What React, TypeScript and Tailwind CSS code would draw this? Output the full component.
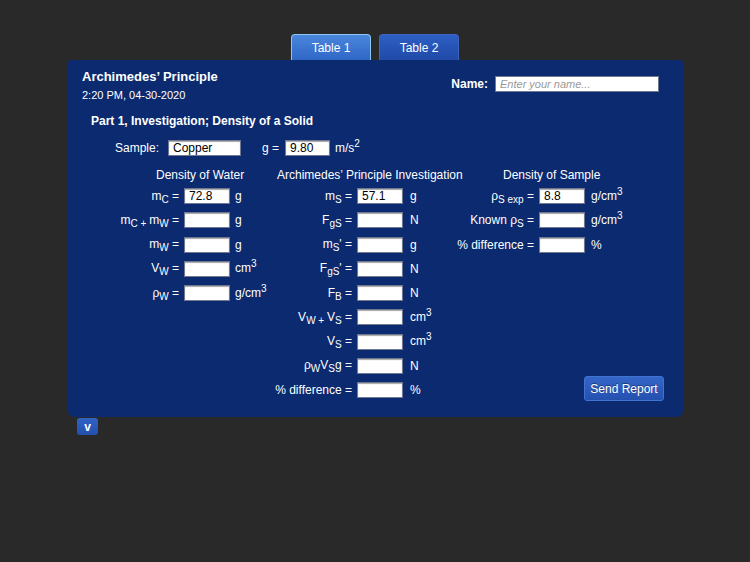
import React from "react";

const Box = ({ v, w = "w-[46px]" }: { v?: string; w?: string }) => (
  <div
    className={`${w} h-[16px] bg-white border border-[#6f7890] shadow-[inset_0_1px_1px_rgba(0,0,0,0.35)] text-black text-[12px] leading-[14px] pl-[4px] shrink-0`}
  >
    {v}
  </div>
);

const Sb = ({ children }: { children: React.ReactNode }) => (
  <span className="text-[10px] relative top-[3px]">{children}</span>
);
const Sp = ({ children }: { children: React.ReactNode }) => (
  <span className="text-[10px] relative top-[-5px]">{children}</span>
);

type Row = { l: React.ReactNode; u: React.ReactNode; v?: string };

const Col = ({
  rows,
  labelW,
  unitMl,
}: {
  rows: Row[];
  labelW: string;
  unitMl: string;
}) => (
  <div className="flex flex-col mt-[1px]">
    {rows.map((r, i) => (
      <div key={i} className="flex items-center h-[24.25px]">
        <div className={`${labelW} flex justify-end pr-[5px] whitespace-nowrap shrink-0`}>
          {r.l}
        </div>
        <Box v={r.v} />
        <div className={`${unitMl} whitespace-nowrap`}>{r.u}</div>
      </div>
    ))}
  </div>
);

const cm3 = (
  <span>
    cm<Sp>3</Sp>
  </span>
);
const gcm3 = (
  <span>
    g/cm<Sp>3</Sp>
  </span>
);

export default function App() {
  const col1: Row[] = [
    { l: <span>m<Sb>C</Sb> =</span>, u: "g", v: "72.8" },
    { l: <span>m<Sb>C + </Sb>m<Sb>W</Sb> =</span>, u: "g" },
    { l: <span>m<Sb>W</Sb> =</span>, u: "g" },
    { l: <span>V<Sb>W</Sb> =</span>, u: cm3 },
    { l: <span>ρ<Sb>W</Sb> =</span>, u: gcm3 },
  ];
  const col2: Row[] = [
    { l: <span>m<Sb>S</Sb> =</span>, u: "g", v: "57.1" },
    { l: <span>F<Sb>gS</Sb> =</span>, u: "N" },
    { l: <span>m<Sb>S</Sb>' =</span>, u: "g" },
    { l: <span>F<Sb>gS</Sb>' =</span>, u: "N" },
    { l: <span>F<Sb>B</Sb> =</span>, u: "N" },
    { l: <span>V<Sb>W + </Sb>V<Sb>S</Sb> =</span>, u: cm3 },
    { l: <span>V<Sb>S</Sb> =</span>, u: cm3 },
    { l: <span>ρ<Sb>W</Sb>V<Sb>S</Sb>g =</span>, u: "N" },
    { l: <span>% difference =</span>, u: "%" },
  ];
  const col3: Row[] = [
    { l: <span>ρ<Sb>S exp</Sb> =</span>, u: gcm3, v: "8.8" },
    { l: <span>Known ρ<Sb>S</Sb> =</span>, u: gcm3 },
    { l: <span>% difference =</span>, u: "%" },
  ];

  return (
    <div
      className="w-[750px] h-[562px] bg-[#292929] pt-[34px] text-white text-[12px] leading-[16px]"
      style={{ fontFamily: '"Liberation Sans", Arial, sans-serif' }}
    >
      <div className="flex justify-center gap-[8px] h-[26px]">
        <div className="w-[80px] h-[26px] rounded-t-[4px] border border-b-0 border-[#8cc6f2] bg-gradient-to-b from-[#4a86dc] to-[#2f67c6] flex items-center justify-center text-[12px]">
          Table 1
        </div>
        <div className="w-[80px] h-[26px] rounded-t-[4px] border border-b-0 border-[#3a64c0] bg-gradient-to-b from-[#2e5fc4] to-[#1f4aa8] flex items-center justify-center text-[12px]">
          Table 2
        </div>
      </div>
      <div className="ml-[68px] w-[615px] h-[357px] rounded-[6px] rounded-t-[3px] bg-[#0b2a6f] pt-[9px] flex flex-col">
        <div className="flex justify-between pl-[14px] pr-[24px]">
          <div>
            <div className="text-[13px] leading-[16px] font-bold">Archimedes’ Principle</div>
            <div className="text-[11px] leading-[14px] mt-[3px]">2:20 PM, 04-30-2020</div>
          </div>
          <div className="flex items-center mt-[7px] h-[16px]">
            <span className="font-bold text-[12px] mr-[7px]">Name:</span>
            <div className="w-[164px] h-[16px] bg-white border border-[#6f7890] text-[11px] leading-[14px] pl-[4px] italic text-[#9a9a9a]">
              Enter your name...
            </div>
          </div>
        </div>
        <div className="pl-[23px] mt-[12px] font-bold text-[12px] leading-[14px]">
          Part 1, Investigation; Density of a Solid
        </div>
        <div className="flex items-center pl-[47px] mt-[12px] h-[16px]">
          <div className="w-[53px]">Sample:</div>
          <Box v="Copper" w="w-[73px]" />
          <div className="w-[21px]" />
          <div className="w-[23px]">g =</div>
          <Box v="9.80" w="w-[45px]" />
          <div className="ml-[5px]">
            m/s<Sp>2</Sp>
          </div>
        </div>
        <div className="flex mt-[11px] flex-1">
          <div className="w-[209px] shrink-0">
            <div className="pl-[88px] whitespace-nowrap">Density of Water</div>
            <Col rows={col1} labelW="w-[116px]" unitMl="ml-[5px]" />
          </div>
          <div className="w-[226px] shrink-0">
            <div className="whitespace-nowrap">Archimedes’ Principle Investigation</div>
            <Col rows={col2} labelW="w-[80px]" unitMl="ml-[7px]" />
          </div>
          <div className="flex-1 flex flex-col">
            <div className="whitespace-nowrap">Density of Sample</div>
            <Col rows={col3} labelW="w-[36px]" unitMl="ml-[6px]" />
            <button className="self-end mr-[19px] mt-auto mb-[16px] w-[80px] h-[25px] rounded-[3px] bg-gradient-to-b from-[#3466c8] to-[#2550b0] border border-[#4272d0] text-white text-[12px] [text-shadow:0_-1px_0_rgba(0,0,0,0.4)]">
              Send Report
            </button>
          </div>
        </div>
      </div>
      <div className="ml-[77px] mt-[1px] w-[21px] h-[17px] rounded-[3px] bg-gradient-to-b from-[#3062c4] to-[#2350ae] flex items-center justify-center text-[12px] font-bold">
        v
      </div>
    </div>
  );
}
